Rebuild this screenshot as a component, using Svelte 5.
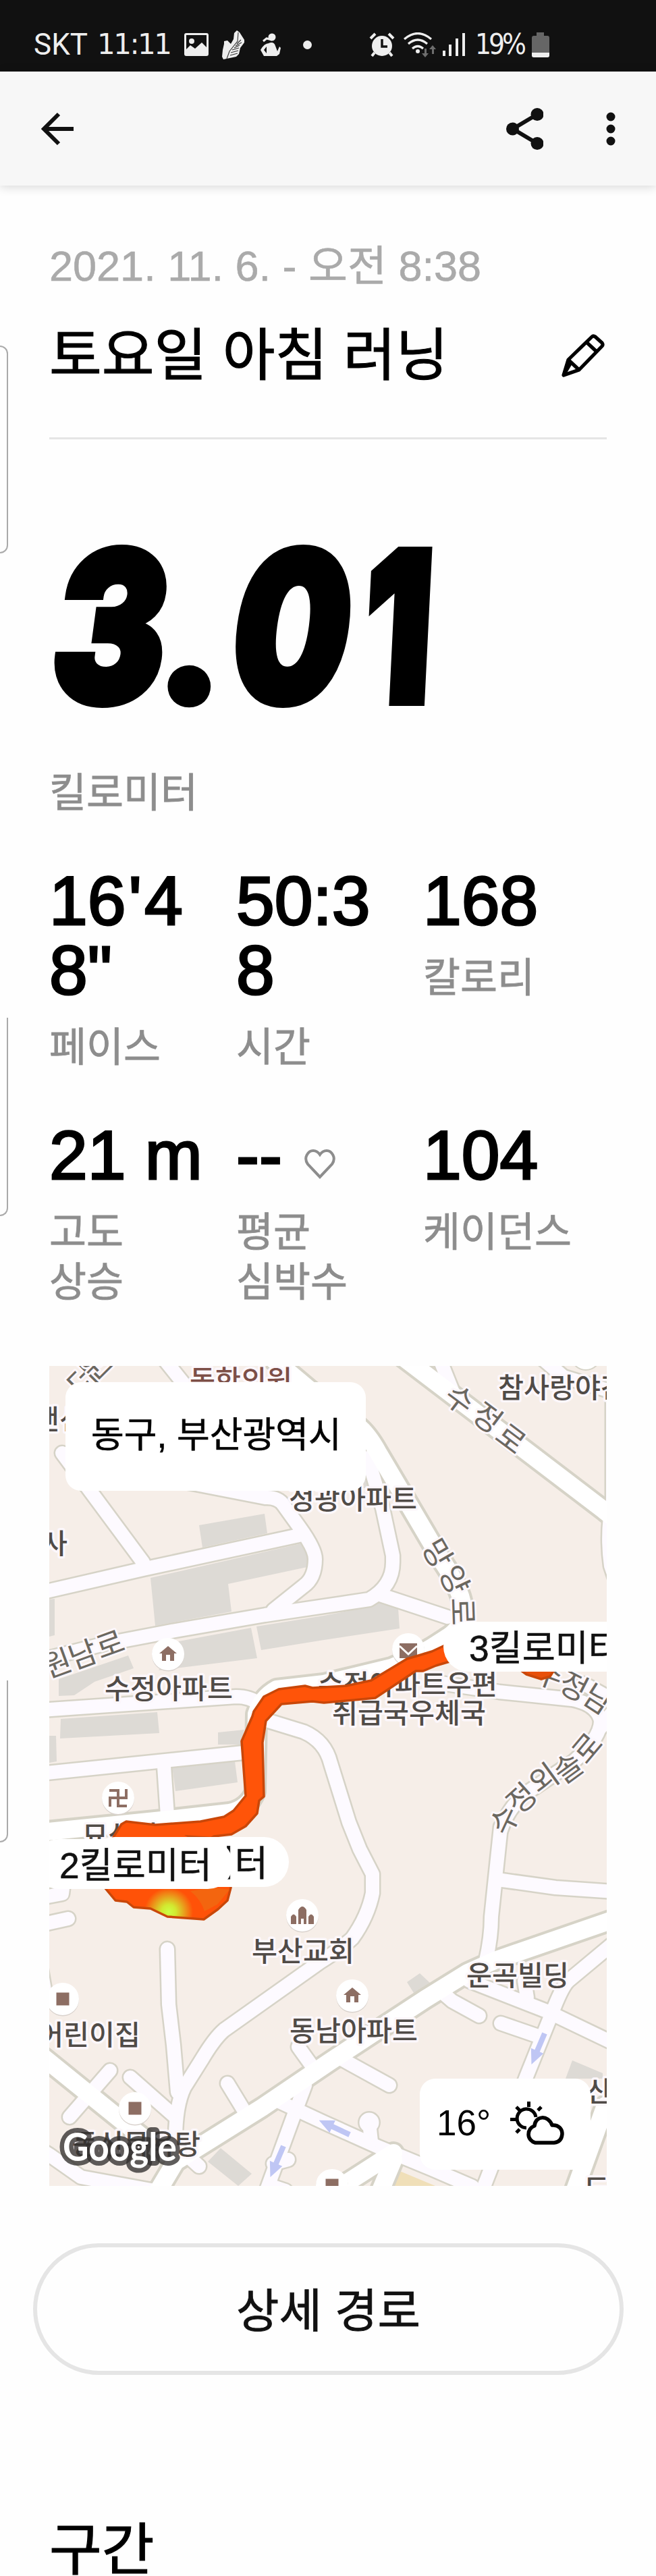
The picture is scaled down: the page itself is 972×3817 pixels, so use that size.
<script>
  // Activity summary
  const activity = {
    date: '2021. 11. 6. - 오전 8:38',
    title: '토요일 아침 러닝',
    unit: '킬로미터',
    place: '동구, 부산광역시',
    temperature: '16°'
  };

  const stats = [
    { value: '16\'48"', label: '페이스' },
    { value: '50:38', label: '시간' },
    { value: '168', label: '칼로리' },
    { value: '21 m', label: '고도 상승' },
    { value: '--', label: '평균 심박수', heart: true },
    { value: '104', label: '케이던스' }
  ];

  // Map geometry, in the coordinates of the map's viewBox
  const buildings = [
    '295,2260 392,2243 396,2272 300,2293',
    '223,2338 447,2287 457,2303 455,2322 338,2347 343,2388 230,2409',
    '73,2370 81,2369 81,2423 73,2425',
    '265,2432 372,2412 381,2457 235,2475',
    '380,2410 480,2394 552,2380 563,2373 590,2383 592,2413 480,2430 387,2445',
    '87,2488 190,2453 198,2472 140,2492 110,2512 87,2513',
    '90,2547 233,2537 236,2568 89,2576',
    '323,2567 362,2563 357,2585 323,2585',
    '73,2572 83,2572 84,2610 73,2612',
    '255,2617 348,2610 352,2641 260,2654',
    '327,3183 373,3221 353,3239 308,3203',
    '603,2937 622,2924 637,2938 613,2953',
    '838,3080 848,3053 893,3072 893,3080',
    '534,2172 546,2196 548,2205 530,2205'
  ];

  const streets = [
    'M92 2153L212 2315',
    'M60 2360L212 2325L443 2275',
    'M270 2195L393 2219Q412 2218 420 2230L443 2262Q467 2295 467 2310Q467 2338 450 2350L405 2386',
    'M60 2460L150 2437L260 2416L393 2393L547 2370Q582 2350 582 2315L582 2305L567 2235L545 2160',
    'M563 2363L663 2396',
    'M652 2015L670 2060',
    'M908 2060L908 2225Q898 2270 905 2320L915 2350',
    'M800 2010L835 2040L900 2060',
    'M240 2010L280 2060',
    'M60 2534L350 2514Q370 2514 385 2525',
    'M388 2547L450 2566Q482 2580 490 2613L517 2700L533 2740L552 2777L552 2805Q545 2840 522 2872Q505 2888 473 2908L332 3008Q318 3020 300 3050L273 3093Q260 3120 260 3170',
    'M248 2888L250 2970L257 3030L263 3100',
    'M193 3078L260 3137',
    'M163 3068L103 3137',
    'M60 3185L73 3193L120 3226L240 3248',
    'M742 2707L728 2840Q728 2870 720 2905',
    'M737 2785L823 2797L910 2803',
    'M742 2712Q750 2685 775 2660L850 2610Q890 2575 890 2550Q885 2525 847 2518L740 2507L640 2492',
    'M865 2495L910 2520',
    'M890 2560L905 2540',
    'M60 2628L370 2596',
    'M243 2617L248 2690',
    'M60 2812L92 2806L94 2790',
    'M60 2852L101 2843',
    'M55 2885L68 2960',
    'M337 3087L365 3133',
    'M442 3033L465 3065',
    'M452 3090L437 3130L395 3245',
    'M405 3110L480 3145L560 3181L640 3214L700 3240',
    'M547 3145L550 3173',
    'M508 3052L577 3090',
    'M655 2952L670 2965L710 2987',
    'M695 2935L810 2980L910 3028',
    'M908 2880L842 2935Q832 2945 817 2985L780 3077L715 3245',
    'M742 2998L800 3018',
    'M777 2935L781 2960',
    'M427 3200L405 3206',
    'M295 3210L262 3180',
    'M405 3240L423 3246'
  ];

  const mainRoads = [
    'M400 2010L457 2058L530 2113Q545 2125 560 2152L612 2240L655 2313Q690 2365 686 2395Q682 2415 660 2428Q620 2455 580 2471L480 2495L410 2503Q388 2515 380 2540L378 2655Q368 2680 340 2686L240 2697L60 2715',
    'M580 1998L895 2238L920 2258',
    'M60 3045L170 3134L240 3190',
    'M235 3245L260 3203L388 3123L490 3054L630 2962L693 2923L733 2905L910 2844',
    'M583 3190L505 3240',
    'M583 3200L562 3250',
    'M897 3120L850 3250'
  ];

  const poiLabels = [
    { text: '맨션', x: 50, y: 2118 },
    { text: '사', x: 62, y: 2302 },
    { text: '참사랑야간', x: 738, y: 2071 },
    { text: '정광아파트', x: 428, y: 2236 },
    { text: '수정아파트', x: 155, y: 2517 },
    { text: '수정아파트우편', x: 471, y: 2511 },
    { text: '취급국우체국', x: 492, y: 2553 },
    { text: '묘심사', x: 122, y: 2735 },
    { text: '부산교회', x: 373, y: 2906 },
    { text: '어린이집', x: 56, y: 3030 },
    { text: '동남아파트', x: 429, y: 3024 },
    { text: '운곡빌딩', x: 691, y: 2942 },
    { text: '동신목욕탕', x: 107, y: 3192 },
    { text: '산', x: 869, y: 3114 },
    { text: '도', x: 865, y: 3258 }
  ];

  // Street names follow their road, so every syllable has its own angle
  const roadLabels = [
    { text: '더', x: 122, y: 2045, angle: -45 },
    { text: '원', x: 143, y: 2022, angle: -45 },
    { text: '원', x: 85, y: 2465, angle: -20 },
    { text: '남', x: 123, y: 2452, angle: -20 },
    { text: '로', x: 163, y: 2437, angle: -20 },
    { text: '수', x: 681, y: 2074, angle: 37 },
    { text: '정', x: 722, y: 2101, angle: 37 },
    { text: '로', x: 757, y: 2132, angle: 37 },
    { text: '망', x: 648, y: 2302, angle: 60 },
    { text: '양', x: 673, y: 2341, angle: 65 },
    { text: '로', x: 685, y: 2388, angle: 88 },
    { text: '수', x: 748, y: 2697, angle: -65 },
    { text: '정', x: 773, y: 2665, angle: -42 },
    { text: '외', x: 806, y: 2636, angle: -36 },
    { text: '솔', x: 842, y: 2620, angle: -36 },
    { text: '로', x: 870, y: 2590, angle: -50 },
    { text: '수', x: 813, y: 2482, angle: 20 },
    { text: '정', x: 850, y: 2499, angle: 27 },
    { text: '남', x: 886, y: 2518, angle: 33 }
  ];

  const pois = [
    { kind: 'home', x: 249, y: 2451 },
    { kind: 'temple', x: 175, y: 2664 },
    { kind: 'mail', x: 605, y: 2444 },
    { kind: 'church', x: 448, y: 2838 },
    { kind: 'square', x: 93, y: 2962 },
    { kind: 'square', x: 200, y: 3124 },
    { kind: 'home', x: 522, y: 2957 },
    { kind: 'square', x: 492, y: 3238 }
  ];

  const arrows = [
    { x: 807, y: 3013, angle: 113 },
    { x: 420, y: 3180, angle: 113 },
    { x: 518, y: 3163, angle: 205 }
  ];
</script>

<div class="screen">
  <!-- System status bar -->
  <div class="status-bar">
    <span class="carrier">SKT</span>
    <span class="clock">11:11</span>
    <svg class="st-picture" width="36" height="34" viewBox="0 0 36 34">
      <path fill="#eee" fill-rule="evenodd" d="M3 0h30a3 3 0 0 1 3 3v28a3 3 0 0 1-3 3H3a3 3 0 0 1-3-3V3a3 3 0 0 1 3-3zM3 3v21l6-6 7 5 10-9 7 7V3zM11 8a4 4 0 1 1 0 8 4 4 0 0 1 0-8z" />
    </svg>
    <svg class="st-shoe" width="34" height="43" viewBox="0 0 34 43">
      <path fill="#eee" d="M20 2L22 0L26 3L33 14L33 18L27 26L25 35L21 39L2 43L0 39L1 29L3 20L3 16L8 15L13 20L17 13L18 4Z" />
      <path fill="none" stroke="#333" stroke-width="1.1" d="M24 3L23 16L11 31L7 42M28 14L22 20M29 18L20 23M26 22L18 26M25 26L15 29M24 30L13 33M23 34L12 37" />
    </svg>
    <svg class="st-figure" width="30" height="34" viewBox="0 0 30 34">
      <circle cx="17" cy="6" r="5.500" fill="#eee" />
      <path fill="#eee" d="M12 15Q20 12 22 19L25 27L28 20L30 22L28 31L24 34H5L0 25Q6 14 14 15zM9 20L5 25L9 30z" fill-rule="evenodd" />
      <path fill="none" stroke="#eee" stroke-width="3" d="M4 12l5-4 8 2" />
    </svg>
    <span class="st-dot"></span>
    <svg class="st-alarm" width="38" height="37" viewBox="0 0 38 37">
      <circle cx="19" cy="20" r="15" fill="#eee" />
      <path fill="none" stroke="#eee" stroke-width="4" d="M2 9l7-7M36 9l-7-7M8 30l-4 5M30 30l4 5" />
      <path fill="none" stroke="#111" stroke-width="3.500" d="M19 10v11h8" />
    </svg>
    <svg class="st-wifi" width="50" height="37" viewBox="0 0 50 37">
      <path fill="none" stroke="#eee" stroke-width="3.200" d="M1 10Q21-7 41 10M7 17Q21 5 35 17M13 24Q21 17 29 24" />
      <circle cx="21" cy="28" r="3" fill="#eee" />
      <path fill="#6d6d6d" d="M31 24h3v7h3l-5 6-5-6h4zM42 32h3v-7h3l-5-6-5 6h4z" />
    </svg>
    <svg class="st-signal" width="33" height="34" viewBox="0 0 33 34">
      <path fill="none" stroke="#eee" stroke-width="4" d="M2 26v8M11 17v17M21 8v26M31 0v34" />
    </svg>
    <span class="percent">19%</span>
    <svg class="st-battery" width="26" height="37" viewBox="0 0 26 37">
      <path fill="#666" d="M7 0h11v5h5a3 3 0 0 1 3 3v26a3 3 0 0 1-3 3H3a3 3 0 0 1-3-3V8a3 3 0 0 1 3-3h4z" />
      <path fill="#eee" d="M0 30h26v4a3 3 0 0 1-3 3H3a3 3 0 0 1-3-3z" />
    </svg>
  </div>

  <!-- App bar -->
  <header class="app-bar">
    <svg width="50" height="50" viewBox="0 0 50 50">
      <path fill="none" stroke="#111" stroke-width="6" d="M49 25H5M27 3L5 25L27 47" />
    </svg>
    <svg class="share" width="55" height="62" viewBox="0 0 55 62">
      <path fill="none" stroke="#111" stroke-width="6" d="M45 10L10 31L45 52" />
      <circle cx="46" cy="9.500" r="9.500" fill="#111" />
      <circle cx="9.500" cy="31" r="9.500" fill="#111" />
      <circle cx="46" cy="52.500" r="9.500" fill="#111" />
    </svg>
    <svg width="14" height="50" viewBox="0 0 14 50">
      <circle cx="7" cy="7" r="6.500" fill="#111" />
      <circle cx="7" cy="25" r="6.500" fill="#111" />
      <circle cx="7" cy="43" r="6.500" fill="#111" />
    </svg>
  </header>

  <!-- Edges of the cards behind the sheet -->
  <div class="edge edge-first"></div>
  <div class="edge edge-second"></div>
  <div class="edge edge-third"></div>

  <main>
    <p class="date">{activity.date}</p>
    <div class="title-row">
      <h1>{activity.title}</h1>
      <svg width="64" height="64" viewBox="0 0 64 64">
        <g fill="none" stroke="#000" stroke-width="5.200" stroke-linejoin="round">
          <path d="M3 61L10 38L45 4Q47 2 50 4L60 13Q62 16 60 18L26 53Z" />
          <path d="M37 12L52 26M11 39L26 53M3 61L13 44" />
        </g>
      </svg>
    </div>

    <svg class="distance" width="640" height="260" viewBox="0 0 640 260">
      <g font-size="308" font-weight="900" font-style="italic">
        <text class="digit" transform="translate(6 241) scale(.81 1)">3</text>
        <text class="point" transform="translate(168 242)" font-size="330">.</text>
        <text class="digit" transform="translate(271 241) scale(.79 1)">0</text>
        <text class="digit one" transform="translate(472 241) skewX(4) scale(.72 1)">1</text>
      </g>
    </svg>
    <p class="unit">{activity.unit}</p>

    <div class="stats">
      {#each stats as stat}
        <div class="stat">
          <div class="value">
            {#each stat.value.split('') as char}<span class:minute-mark={char === "'"}>{char}</span>{/each}
            {#if stat.heart}
              <svg width="46" height="44" viewBox="0 0 46 44">
                <path fill="none" stroke="#8d8d8d" stroke-width="4" d="M23 41L5 22C-2 12 6 2 13 2C18 2 21 5 23 8C25 5 28 2 33 2C40 2 48 12 41 22Z" />
              </svg>
            {/if}
          </div>
          <div class="label">{stat.label}</div>
        </div>
      {/each}
    </div>

    <!-- Route map -->
    <div class="map">
      <svg class="map-canvas" width="826" height="1215" viewBox="73 2024 826 1215">
        <defs>
          <radialGradient id="speed" gradientUnits="userSpaceOnUse" cx="250" cy="2833" r="36">
            <stop offset="0" stop-color="#ccff45" />
            <stop offset=".3" stop-color="#d2e830" />
            <stop offset="1" stop-color="#ff5208" />
          </radialGradient>
        </defs>
        <rect x="73" y="2024" width="826" height="1215" fill="#f6eee8" />
        <g fill="#dddad5">
          {#each buildings as points}
            <polygon {points} />
          {/each}
        </g>
        <polygon points="590,3216 645,3239 578,3239" fill="#f0dfb8" />

        <g class="street-casing">
          {#each streets as d}<path {d} />{/each}
        </g>
        <circle cx="547" cy="3145" r="17" fill="#d6d3c7" />
        <circle cx="868" cy="2008" r="22" fill="#fff" stroke="#d6d3c7" stroke-width="2" />
        <g class="main-casing">
          {#each mainRoads as d}<path {d} />{/each}
        </g>
        <g class="street">
          {#each streets as d}<path {d} />{/each}
        </g>
        <circle cx="547" cy="3145" r="14.500" fill="#fdfaff" />
        <g class="main-road">
          {#each mainRoads as d}<path {d} />{/each}
        </g>

        {#each arrows as arrow}
          <path fill="#bfc6f4" transform="translate({arrow.x} {arrow.y}) rotate({arrow.angle})" d="M0-4H28V-10L50 0L28 10V4H0z" />
        {/each}

        {#each pois as poi}
          <g transform="translate({poi.x} {poi.y})">
            <circle cy="1.500" r="24" fill="#d9d2cd" />
            <circle r="24" fill="#fff" />
            {#if poi.kind === 'home'}
              <path fill="#8d6e63" d="M0-12L13-1H9V10H3V1H-3V10H-9V-1H-13z" />
            {:else if poi.kind === 'temple'}
              <path fill="none" stroke="#8d6e63" stroke-width="4" d="M-13-11H0V12H13M-12 13V0H12V-13" />
            {:else if poi.kind === 'mail'}
              <rect x="-13" y="-9" width="26" height="22" fill="#8d6e63" />
              <path fill="none" stroke="#fff" stroke-width="3" d="M-13-5L0 7L13-5" />
            {:else if poi.kind === 'church'}
              <path fill="#8d6e63" d="M-6 13V-8Q0-18 6-8V13H2V5H-2V13zM-17 13V2Q-13-5-9 2V13zM9 13V2Q13-5 17 2V13z" />
            {:else}
              <rect x="-9.500" y="-9.500" width="19" height="19" fill="#8d6e63" />
            {/if}
          </g>
        {/each}

        <text class="poi-label hospital" x="281" y="2060">동한의원</text>
        {#each poiLabels as label}
          <text class="poi-label" x={label.x} y={label.y}>{label.text}</text>
        {/each}
        {#each roadLabels as label}
          <text class="road-label" transform="translate({label.x} {label.y}) rotate({label.angle})" y="16">{label.text}</text>
        {/each}

        <!-- Recorded run, coloured by speed -->
        <g stroke="#c94709" stroke-width="3.500" stroke-linejoin="round">
          <path fill="#ff5409" d="M672 2432L657 2439L640 2447L617 2454L603 2458L550 2490L513 2498L463 2501L452 2498L413 2503L391 2514L376 2536L374 2543L358 2580L364 2661L346 2683L332 2692L297 2699L230 2704L187 2699L180 2703L160 2735L250 2760L317 2721L343 2718L364 2706L381 2687L384 2668L391 2662L389 2582L394 2550L417 2525L463 2521L480 2523L556 2516L616 2476L627 2476L646 2468L680 2458Z" />
          <path fill="url(#speed)" d="M150 2785L156 2798L171 2816L188 2818L198 2826L223 2828L248 2840L302 2844L323 2829L337 2816L342 2797V2785Z" />
          <path fill="#e8500a" d="M765 2470L780 2481L802 2488L815 2484L824 2470Z" />
        </g>
        <path fill="#c94a0c" d="M273 2719L317 2722V2726H285z" />
        <path fill="#f06a12" d="M282 2802L315 2797L340 2800L322 2822L303 2832Q298 2815 282 2802z" opacity=".8" />

        <text class="google" x="93" y="3202" textLength="169" lengthAdjust="spacingAndGlyphs">Google</text>
      </svg>

      <div class="place">{activity.place}</div>
      <div class="km km-one">1킬로미터</div>
      <div class="km km-two">2킬로미터</div>
      <div class="km km-three">3킬로미터</div>
      <div class="weather">
        <span>{activity.temperature}</span>
        <svg width="80" height="66" viewBox="0 0 80 66">
          <g fill="none" stroke="#000" stroke-width="5">
            <path d="M38 24A14 14 0 1 0 24 40" />
            <path d="M27.500 1V9M9 9L14 14M46 9L41 14M0 27.500H9M9 47L14 42" />
            <path stroke-width="5.500" d="M37 62A13 13 0 0 1 36 37C37 22 56 20 62 36C72 35 77 42 77 49Q76 61 65 62Z" stroke-linejoin="round" />
          </g>
        </svg>
      </div>
    </div>
  </main>

  <button class="route-button">상세 경로</button>
  <h2>구간</h2>
</div>

<style>
  :global(body) {
    margin: 0;
    background: #fefefe;
  }

  .screen {
    position: relative;
    width: 972px;
    height: 3817px;
    overflow: hidden;
    background: #fefefe;
    color: #000;
    font-family: "Liberation Sans", "Noto Sans CJK KR", sans-serif;
  }

  /* Status bar */
  .status-bar {
    display: flex;
    align-items: center;
    height: 106px;
    padding: 26px 0 0 50px;
    box-sizing: border-box;
    background: #111;
    color: #eee;
    font-size: 44px;
    line-height: 50px;
    white-space: nowrap;
  }

  .status-bar svg {
    flex: none;
  }

  .carrier {
    width: 94px;
    font-family: Roboto, sans-serif;
  }

  .clock {
    width: 129px;
    font-family: "DejaVu Sans", sans-serif;
    font-size: 42px;
    letter-spacing: -2.5px;
  }

  .st-shoe {
    margin-left: 20px;
  }

  .st-figure {
    margin-left: 23px;
  }

  .st-dot {
    width: 13px;
    height: 13px;
    margin-left: 33px;
    border-radius: 50%;
    background: #eee;
  }

  .st-alarm {
    margin-left: 85px;
  }

  .st-wifi {
    margin-left: 13px;
  }

  .st-signal {
    margin-left: 8px;
  }

  .percent {
    width: 84px;
    margin-left: 15px;
    font-family: "DejaVu Sans Condensed", "DejaVu Sans", sans-serif;
    font-size: 42px;
    letter-spacing: -4px;
  }

  /* App bar */
  .app-bar {
    display: flex;
    align-items: center;
    height: 169px;
    padding: 0 60px;
    box-sizing: border-box;
    background: #f7f7f7;
    box-shadow: 0 2px 14px rgba(0, 0, 0, 0.16);
  }

  .share {
    margin-left: auto;
    margin-right: 93px;
  }

  /* Card edges on the left */
  .edge {
    position: absolute;
    left: -20px;
    width: 30px;
    border: 2px solid #aaa;
    border-left: 0;
  }

  .edge-first {
    top: 512px;
    height: 304px;
    border-radius: 0 12px 12px 0;
  }

  .edge-second {
    top: 1508px;
    height: 292px;
    border-top: 0;
    border-radius: 0 0 12px 0;
  }

  .edge-third {
    top: 2490px;
    height: 238px;
    border-top: 0;
    border-radius: 0 0 12px 0;
  }

  /* Summary */
  main {
    padding: 79px 73px 0;
  }

  p,
  h1,
  h2 {
    margin: 0;
    font-weight: 400;
  }

  .date {
    height: 80px;
    color: #aaa;
    font-size: 63px;
    line-height: 80px;
    white-space: nowrap;
    -webkit-text-stroke: 0.6px #aaa;
  }

  .title-row {
    display: flex;
    align-items: center;
    justify-content: space-between;
    height: 217px;
    padding: 0 3px 28px 0;
    box-sizing: border-box;
    border-bottom: 3px solid #e5e5e5;
  }

  h1,
  h2 {
    font-size: 84.5px;
    line-height: 100px;
    -webkit-text-stroke: 1.2px #000;
  }

  .distance {
    display: block;
    margin-top: 148px;
  }

  .digit {
    font-family: Inter, sans-serif;
    stroke: #000;
    stroke-width: 12px;
  }

  .point {
    font-family: Lato, sans-serif;
    font-style: normal;
    stroke: #000;
    stroke-width: 10px;
  }

  .unit {
    margin-top: 80px;
    color: #8d8d8d;
    font-size: 59.8px;
    line-height: 74px;
    -webkit-text-stroke: 0.8px #8d8d8d;
  }

  .stats {
    display: grid;
    grid-template-columns: 277px 277px 272px;
    grid-template-rows: 377px 363px;
    margin-top: 71px;
  }

  .value {
    width: 235px;
    font-size: 102px;
    line-height: 103px;
    word-break: break-all;
    -webkit-text-stroke: 3px #000;
  }

  .minute-mark {
    padding: 0 4px;
  }

  .value svg {
    margin-left: 5px;
  }

  .label {
    width: 225px;
    margin-top: 26px;
    color: #8d8d8d;
    font-size: 59.8px;
    line-height: 74px;
    word-break: keep-all;
    -webkit-text-stroke: 0.8px #8d8d8d;
  }

  /* Map */
  .map {
    position: relative;
    width: 826px;
    height: 1215px;
    overflow: hidden;
  }

  .map-canvas {
    display: block;
  }

  .street-casing path,
  .street path,
  .main-casing path,
  .main-road path {
    fill: none;
    stroke-linecap: round;
    stroke-linejoin: round;
  }

  .street-casing path {
    stroke: #d6d3c7;
    stroke-width: 25px;
  }

  .street path {
    stroke: #fdfaff;
    stroke-width: 20px;
  }

  .main-casing path {
    stroke: #d6d3c7;
    stroke-width: 34px;
  }

  .main-road path {
    stroke: #fff;
    stroke-width: 26px;
  }

  .poi-label,
  .road-label {
    font-family: "Noto Sans CJK KR", sans-serif;
    font-size: 41.3px;
    font-weight: 500;
    fill: #504b47;
    stroke: #fcf7fb;
    stroke-width: 7px;
    stroke-linejoin: round;
    paint-order: stroke;
  }

  .hospital {
    fill: #7d4f47;
  }

  .road-label {
    font-size: 45px;
    font-weight: 400;
    fill: #6b6760;
    stroke-width: 6px;
    text-anchor: middle;
  }

  .google {
    font-family: Lato, sans-serif;
    font-size: 57px;
    font-weight: 700;
    fill: #fff;
    stroke: rgba(50, 48, 46, 0.78);
    stroke-width: 14px;
    stroke-linejoin: round;
    paint-order: stroke;
  }

  .place,
  .weather {
    position: absolute;
    display: flex;
    align-items: center;
    box-sizing: border-box;
    border-radius: 23px;
    background: #fff;
    font-size: 53px;
    white-space: nowrap;
  }

  .place {
    left: 24px;
    top: 24px;
    width: 445px;
    height: 161px;
    padding: 0 0 14px 38px;
    -webkit-text-stroke: 0.6px #000;
  }

  .weather {
    right: 24px;
    bottom: 24px;
    width: 253px;
    height: 135px;
    padding: 0 0 4px 25px;
    gap: 29px;
  }

  .km {
    position: absolute;
    height: 74px;
    padding: 0 31px 0 38px;
    border-radius: 37px;
    background: #fff;
    color: #111;
    font-size: 53.3px;
    line-height: 80px;
    white-space: nowrap;
    -webkit-text-stroke: 0.6px #111;
  }

  .km-one {
    left: 60px;
    top: 698px;
  }

  .km-two {
    left: -23px;
    top: 701px;
  }

  .km-three {
    left: 584px;
    top: 379px;
  }

  /* Footer of the summary */
  .route-button {
    display: block;
    width: 875px;
    height: 195px;
    margin: 85px 0 0 49px;
    padding: 0 0 6px;
    border: 6px solid #e5e5e5;
    border-radius: 98px;
    background: transparent;
    color: #111;
    font-family: inherit;
    font-size: 69px;
    -webkit-text-stroke: 0.8px #111;
  }

  h2 {
    margin: 210px 0 0 73px;
  }
</style>
